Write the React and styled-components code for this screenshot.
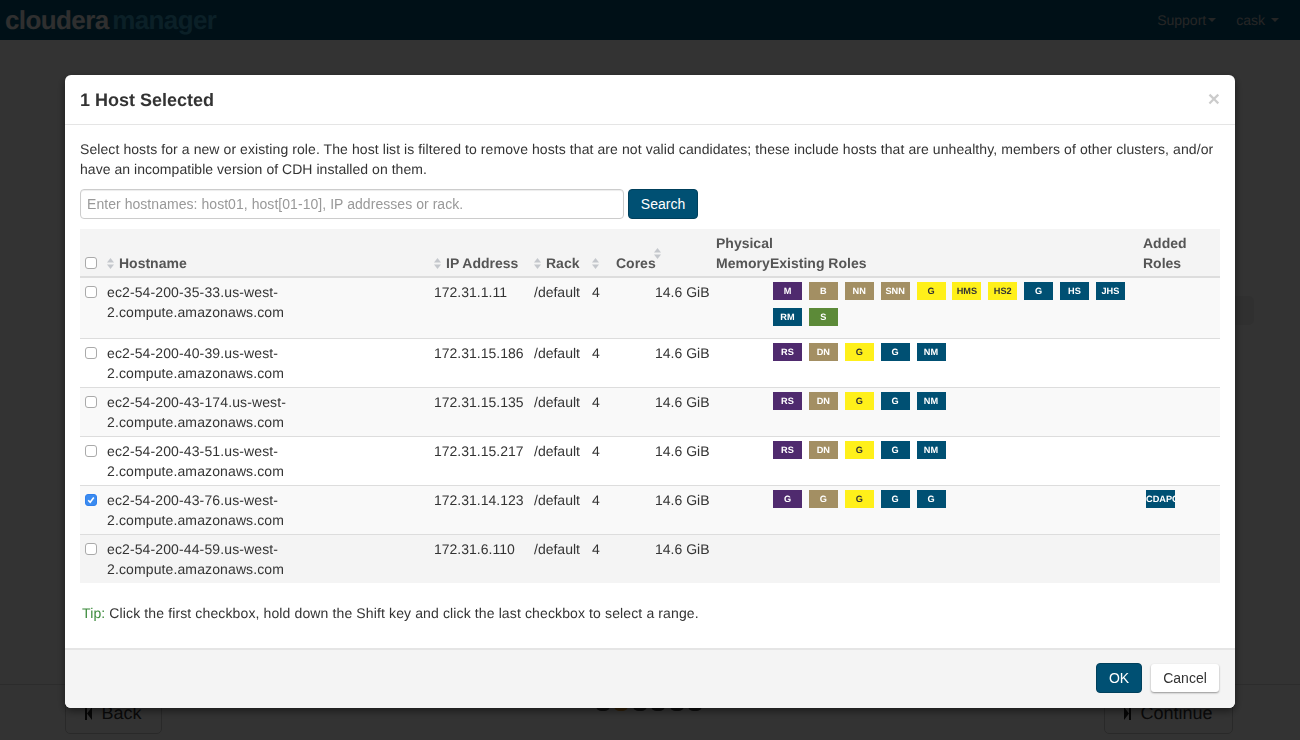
import styled, { createGlobalStyle } from "styled-components";

const GlobalStyle = createGlobalStyle`
  html, body { margin: 0; height: 100%; overflow: hidden; }
  body {
    background: #fff;
    font-family: "Liberation Sans", Arial, sans-serif;
    font-size: 14px;
    line-height: 20px;
    color: #333;
    text-rendering: geometricPrecision;
  }
`;

const Page = styled.div`
  width: 1300px;
  height: 740px;
  display: flex;
  flex-direction: column;
`;
const TopBar = styled.div`
  height: 40px;
  background: #005073;
  display: flex;
  align-items: center;
  justify-content: space-between;
  padding: 0 21px 0 5px;
`;
const Logo = styled.div`
  font-size: 26px;
  font-weight: 700;
  letter-spacing: -0.6px;
  word-spacing: -3px;
  color: #ececec;
  line-height: 36px;
  span { color: #3a9fc4; }
`;
const TopLinks = styled.div`
  display: flex;
  gap: 20px;
`;
const TopLink = styled.div`
  color: #bbb;
  display: flex;
  align-items: center;
  gap: ${(p) => p.$gap}px;
`;
const Caret = styled.i`
  width: 0;
  height: 0;
  border-left: 4px solid transparent;
  border-right: 4px solid transparent;
  border-top: 4px solid #bbb;
`;
const PageBody = styled.div`
  flex: 1;
  display: flex;
  justify-content: flex-end;
  padding: 256px 46px 0 0;
`;
const SideBox = styled.div`
  width: 60px;
  height: 29px;
  background: #f0f0f0;
  border-radius: 5px;
`;
const PageFooter = styled.div`
  height: 55px;
  border-top: 1px solid #ddd;
  display: flex;
  align-items: flex-start;
  justify-content: space-between;
  padding: 0 67px 0 65px;
`;
const NavButton = styled.div`
  width: ${(p) => p.$w}px;
  height: 42px;
  margin-top: 7px;
  border: 1px solid #ccc;
  border-radius: 5px;
  display: flex;
  align-items: center;
  justify-content: center;
  gap: 9px;
  font-size: 18px;
  color: #333;
  box-sizing: border-box;
`;
const Dots = styled.div`
  display: flex;
  gap: 4.4px;
  margin: 15px 0 0 32px;
`;
const Dot = styled.i`
  width: 14px;
  height: 11px;
  border-radius: 5px;
  background: ${(p) => (p.$on ? "#f0a030" : "#444")};
`;

const Overlay = styled.div`
  position: fixed;
  inset: 0;
  background: rgba(0, 0, 0, 0.8);
`;
const Modal = styled.div`
  position: fixed;
  left: 65px;
  top: 75px;
  width: 1170px;
  height: 633px;
  background: #fff;
  border-radius: 6px;
  display: flex;
  flex-direction: column;
  box-shadow: 0 3px 9px rgba(0, 0, 0, 0.5);
  overflow: hidden;
`;
const ModalHeader = styled.div`
  height: 49px;
  border-bottom: 1px solid #e5e5e5;
  display: flex;
  align-items: center;
  justify-content: space-between;
  padding: 0 15px;
`;
const Title = styled.h4`
  margin: 0;
  font-size: 18px;
  font-weight: 700;
  color: #333;
`;
const Close = styled.span`
  font-size: 21px;
  font-weight: 700;
  color: #000;
  opacity: 0.2;
  line-height: 1;
  margin-top: -1px;
`;
const ModalBody = styled.div`
  flex: 1;
  padding: 14px 15px 0;
`;
const Intro = styled.p`
  margin: 0 0 10px;
`;
const IntroLine = styled.span`
  display: block;
  white-space: nowrap;
  letter-spacing: ${(p) => p.$spacing}px;
`;
const SearchRow = styled.div`
  display: flex;
  gap: 4px;
  margin-bottom: 10px;
`;
const SearchInput = styled.input`
  width: 544px;
  height: 30px;
  box-sizing: border-box;
  border: 1px solid #ccc;
  border-radius: 4px;
  padding: 0 6px;
  font: 14px "Liberation Sans", Arial, sans-serif;
  letter-spacing: 0.05px;
  color: #555;
  box-shadow: inset 0 1px 1px rgba(0, 0, 0, 0.075);
  &::placeholder { color: #999; opacity: 1; }
`;
const PrimaryButton = styled.button`
  height: 30px;
  width: ${(p) => p.$w}px;
  padding: 0;
  background: #005073;
  border: 1px solid #00405c;
  border-radius: 4px;
  color: #fff;
  font: 14px "Liberation Sans", Arial, sans-serif;
`;
const CancelButton = styled.button`
  height: 28px;
  width: 68px;
  padding: 0;
  background: #fff;
  border: 0;
  border-radius: 3px;
  box-shadow: 0 1px 2px rgba(0, 0, 0, 0.4);
  color: #333;
  font: 14px "Liberation Sans", Arial, sans-serif;
`;
const Table = styled.table`
  width: 1140px;
  border-collapse: collapse;
  table-layout: fixed;
`;
const Th = styled.th`
  background: #f4f4f4;
  border-bottom: 2px solid #ddd;
  padding: 4px 0 3px;
  text-align: left;
  vertical-align: bottom;
  font-weight: 700;
  color: #555;
  white-space: ${(p) => (p.$wrap ? "normal" : "nowrap")};
`;
const Tr = styled.tr`
  background: ${(p) => p.$bg};
`;
const Td = styled.td`
  border-top: ${(p) => (p.$first ? 0 : "1px solid #ddd")};
  padding: 4px 0 ${(p) => p.$pb || 4}px;
  vertical-align: top;
  color: #333;
`;
const HostName = styled.span`
  letter-spacing: 0.12px;
`;
const CheckCell = styled.span`
  display: block;
  padding: 4px 0 0 5px;
  height: 16px;
`;
const Check = styled.span`
  display: block;
  box-sizing: border-box;
  width: 12px;
  height: 12px;
  border-radius: 3px;
  border: 1px solid ${(p) => (p.$on ? "#2f80ed" : "#aaa")};
  background: ${(p) => (p.$on ? "#3b8bf0" : "#fff")};
  svg { display: block; }
`;
const SortIcon = styled.svg`
  width: 7px;
  height: 11px;
  margin-right: ${(p) => p.$mr || 5}px;
  vertical-align: -1px;
`;
const MemoryHead = styled.span`
  display: block;
  position: relative;
  padding-left: 61px;
`;
const FloatSort = styled.svg`
  position: absolute;
  left: -1px;
  top: 15px;
  width: 7px;
  height: 11px;
`;
const Roles = styled.div`
  display: flex;
  flex-wrap: wrap;
  gap: 8px 6.88px;
  margin: 0 0 0 3px;
`;
const Role = styled.span`
  width: 29px;
  height: 18px;
  overflow: hidden;
  background: ${(p) => p.$bg};
  color: ${(p) => p.$fg};
  font-size: 9.2px;
  font-weight: 700;
  line-height: 18px;
  text-align: center;
  white-space: nowrap;
`;
const Tip = styled.p`
  margin: 20px 0 0 2px;
  letter-spacing: 0.125px;
`;
const TipLabel = styled.span`
  color: #3c8b3c;
`;
const ModalFooter = styled.div`
  height: 56px;
  background: #f4f4f4;
  border-top: 2px solid #e5e5e5;
  display: flex;
  align-items: center;
  justify-content: flex-end;
  gap: 9px;
  padding: 0 16px 2px 15px;
`;

const colors = {
  p: ["#4f2a6e", "#fff"],
  t: ["#a38f63", "#fff"],
  y: ["#fff01a", "#333"],
  b: ["#005073", "#fff"],
  g: ["#5c8a38", "#fff"],
};

const fullRoles = [
  ["M", "p"], ["B", "t"], ["NN", "t"], ["SNN", "t"], ["G", "y"], ["HMS", "y"], ["HS2", "y"],
  ["G", "b"], ["HS", "b"], ["JHS", "b"], ["RM", "b"], ["S", "g"],
];
const workerRoles = [["RS", "p"], ["DN", "t"], ["G", "y"], ["G", "b"], ["NM", "b"]];
const gatewayRoles = [["G", "p"], ["G", "t"], ["G", "y"], ["G", "b"], ["G", "b"]];

const hosts = [
  { name: "ec2-54-200-35-33", ip: "172.31.1.11", roles: fullRoles, bg: "#f9f9f9", pb: 12 },
  { name: "ec2-54-200-40-39", ip: "172.31.15.186", roles: workerRoles, bg: "#fff" },
  { name: "ec2-54-200-43-174", ip: "172.31.15.135", roles: workerRoles, bg: "#f9f9f9" },
  { name: "ec2-54-200-43-51", ip: "172.31.15.217", roles: workerRoles, bg: "#fff" },
  { name: "ec2-54-200-43-76", ip: "172.31.14.123", roles: gatewayRoles, bg: "#f9f9f9", checked: true, added: true },
  { name: "ec2-54-200-44-59", ip: "172.31.6.110", roles: [], bg: "#f4f4f4" },
];

function SortPaths() {
  return (
    <>
      <path d="M3.5 0 L7 4.5 L0 4.5 Z" fill="#c4c7cc" />
      <path d="M0 6.5 L7 6.5 L3.5 11 Z" fill="#c4c7cc" />
    </>
  );
}

function Sort(props) {
  return (
    <SortIcon viewBox="0 0 7 11" {...props}>
      <SortPaths />
    </SortIcon>
  );
}

function Box({ on }) {
  return (
    <CheckCell>
      <Check $on={on}>
        {on && (
          <svg width="10" height="10" viewBox="0 0 10 10">
            <path d="M2.2 5.2 L4.2 7.2 L7.8 2.6" fill="none" stroke="#fff" strokeWidth="1.6" />
          </svg>
        )}
      </Check>
    </CheckCell>
  );
}

export default function App() {
  return (
    <>
      <GlobalStyle />
      <Page>
        <TopBar>
          <Logo>
            cloudera<span> manager</span>
          </Logo>
          <TopLinks>
            <TopLink $gap={2}>
              Support
              <Caret />
            </TopLink>
            <TopLink $gap={6}>
              cask
              <Caret />
            </TopLink>
          </TopLinks>
        </TopBar>
        <PageBody>
          <SideBox />
        </PageBody>
        <PageFooter>
          <NavButton $w={97}>
            <svg width="7" height="13" viewBox="0 0 7 13">
              <path d="M0 0h2v13H0zM7 0v13L2 6.5z" fill="#222" />
            </svg>
            Back
          </NavButton>
          <Dots>
            {[0, 1, 2, 3, 4, 5].map((i) => (
              <Dot key={i} $on={i === 1} />
            ))}
          </Dots>
          <NavButton $w={129}>
            <svg width="7" height="13" viewBox="0 0 7 13">
              <path d="M0 0l5 6.5-5 6.5zM5 0h2v13H5z" fill="#222" />
            </svg>
            Continue
          </NavButton>
        </PageFooter>
      </Page>
      <Overlay />
      <Modal>
        <ModalHeader>
          <Title>1 Host Selected</Title>
          <Close>×</Close>
        </ModalHeader>
        <ModalBody>
          <Intro>
            <IntroLine $spacing={0.083}>
              Select hosts for a new or existing role. The host list is filtered to remove hosts that are not valid
              candidates; these include hosts that are unhealthy, members of other clusters, and/or
            </IntroLine>
            <IntroLine $spacing={0.04}>have an incompatible version of CDH installed on them.</IntroLine>
          </Intro>
          <SearchRow>
            <SearchInput placeholder="Enter hostnames: host01, host[01-10], IP addresses or rack." />
            <PrimaryButton $w={70}>Search</PrimaryButton>
          </SearchRow>
          <Table>
            <colgroup>
              <col style={{ width: 27 }} />
              <col style={{ width: 327 }} />
              <col style={{ width: 100 }} />
              <col style={{ width: 58 }} />
              <col style={{ width: 63 }} />
              <col style={{ width: 115 }} />
              <col style={{ width: 373 }} />
              <col style={{ width: 77 }} />
            </colgroup>
            <thead>
              <tr>
                <Th><Box /></Th>
                <Th><Sort />Hostname</Th>
                <Th><Sort />IP Address</Th>
                <Th><Sort />Rack</Th>
                <Th><Sort $mr={17} />Cores</Th>
                <Th $wrap>
                  <MemoryHead>
                    <FloatSort viewBox="0 0 7 11"><SortPaths /></FloatSort>
                    Physical Memory
                  </MemoryHead>
                </Th>
                <Th>Existing Roles</Th>
                <Th $wrap>Added Roles</Th>
              </tr>
            </thead>
            <tbody>
              {hosts.map((h, i) => (
                <Tr key={h.name} $bg={h.bg}>
                  <Td $first={i === 0}><Box on={h.checked} /></Td>
                  <Td $first={i === 0} $pb={h.pb ? 4 + h.pb : 4}>
                    <HostName>
                      {h.name}.us-west-
                      <br />
                      2.compute.amazonaws.com
                    </HostName>
                  </Td>
                  <Td $first={i === 0}>{h.ip}</Td>
                  <Td $first={i === 0}>/default</Td>
                  <Td $first={i === 0}>4</Td>
                  <Td $first={i === 0}>14.6 GiB</Td>
                  <Td $first={i === 0}>
                    <Roles>
                      {h.roles.map(([label, c], j) => (
                        <Role key={j} $bg={colors[c][0]} $fg={colors[c][1]}>{label}</Role>
                      ))}
                    </Roles>
                  </Td>
                  <Td $first={i === 0}>
                    {h.added && (
                      <Roles>
                        <Role $bg={colors.b[0]} $fg="#fff">CDAPC</Role>
                      </Roles>
                    )}
                  </Td>
                </Tr>
              ))}
            </tbody>
          </Table>
          <Tip>
            <TipLabel>Tip:</TipLabel> Click the first checkbox, hold down the Shift key and click the last checkbox to
            select a range.
          </Tip>
        </ModalBody>
        <ModalFooter>
          <PrimaryButton $w={46}>OK</PrimaryButton>
          <CancelButton>Cancel</CancelButton>
        </ModalFooter>
      </Modal>
    </>
  );
}
